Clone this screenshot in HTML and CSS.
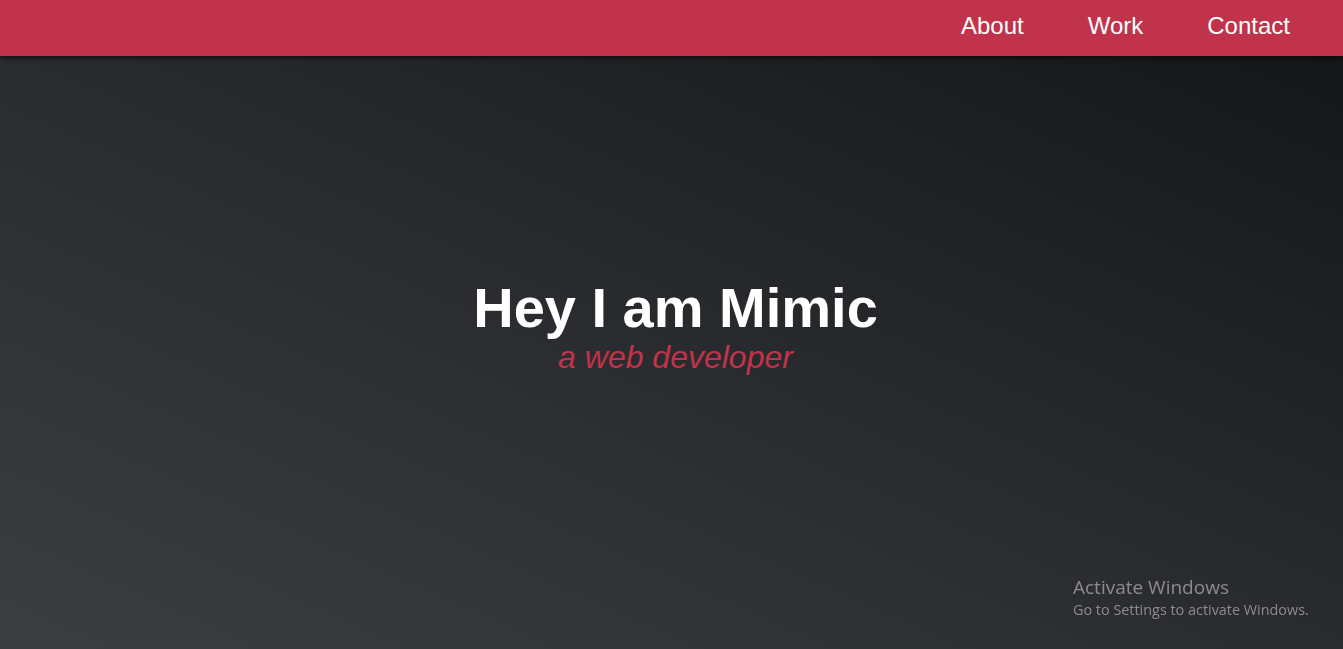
FILE: index.html
```html
<!DOCTYPE html>
<html lang="en">
<head>
<meta charset="utf-8">
<title>Mimic</title>
<link rel="stylesheet" href="styles.css">
</head>
<body>
<header class="topbar">
  <nav class="nav">
    <a class="nav-link" href="#about">About</a>
    <a class="nav-link" href="#work">Work</a>
    <a class="nav-link" href="#contact">Contact</a>
  </nav>
</header>
<main class="hero">
  <h1 class="hero-title">Hey I am Mimic</h1>
  <p class="hero-sub">a web developer</p>
</main>
<div class="watermark">
  <div class="wm-title">Activate Windows</div>
  <div class="wm-text">Go to Settings to activate Windows.</div>
</div>
</body>
</html>
```
FILE: styles.css
```css
html, body {
  margin: 0;
  padding: 0;
  height: 100%;
}
body {
  font-family: "Liberation Sans", Arial, sans-serif;
  background: #1f2022;
  overflow: hidden;
  display: flex;
  flex-direction: column;
}
.topbar {
  height: 56px;
  background: #c0334a;
  box-shadow: 0 2px 5px rgba(0, 0, 0, 0.6);
  display: flex;
  justify-content: flex-end;
  align-items: center;
  position: relative;
  z-index: 2;
  flex: none;
}
.nav {
  display: flex;
  gap: 64px;
  padding-right: 53px;
}
.nav-link {
  color: #ffffff;
  text-decoration: none;
  font-size: 24px;
  line-height: 28px;
  margin-top: -4px;
}
.hero {
  flex: 1;
  background: linear-gradient(to top right, #3b3e41 0%, #2a2b2e 50%, #151617 100%);
  display: flex;
  flex-direction: column;
  align-items: center;
  justify-content: center;
  padding-left: 8px;
  padding-bottom: 51px;
}
.hero-title {
  margin: 0;
  color: #ffffff;
  font-size: 56px;
  font-weight: bold;
  line-height: 60px;
}
.hero-sub {
  margin: -1px 0 0;
  color: #c0334a;
  font-size: 32px;
  font-style: italic;
  line-height: 40px;
}
.watermark {
  position: fixed;
  left: 1073px;
  top: 575px;
  color: #8b8c8e;
  font-family: "Open Sans", "Noto Sans", sans-serif;
}
.wm-title {
  font-size: 19px;
  line-height: 25px;
}
.wm-text {
  font-size: 14.4px;
  line-height: 20px;
}
```
